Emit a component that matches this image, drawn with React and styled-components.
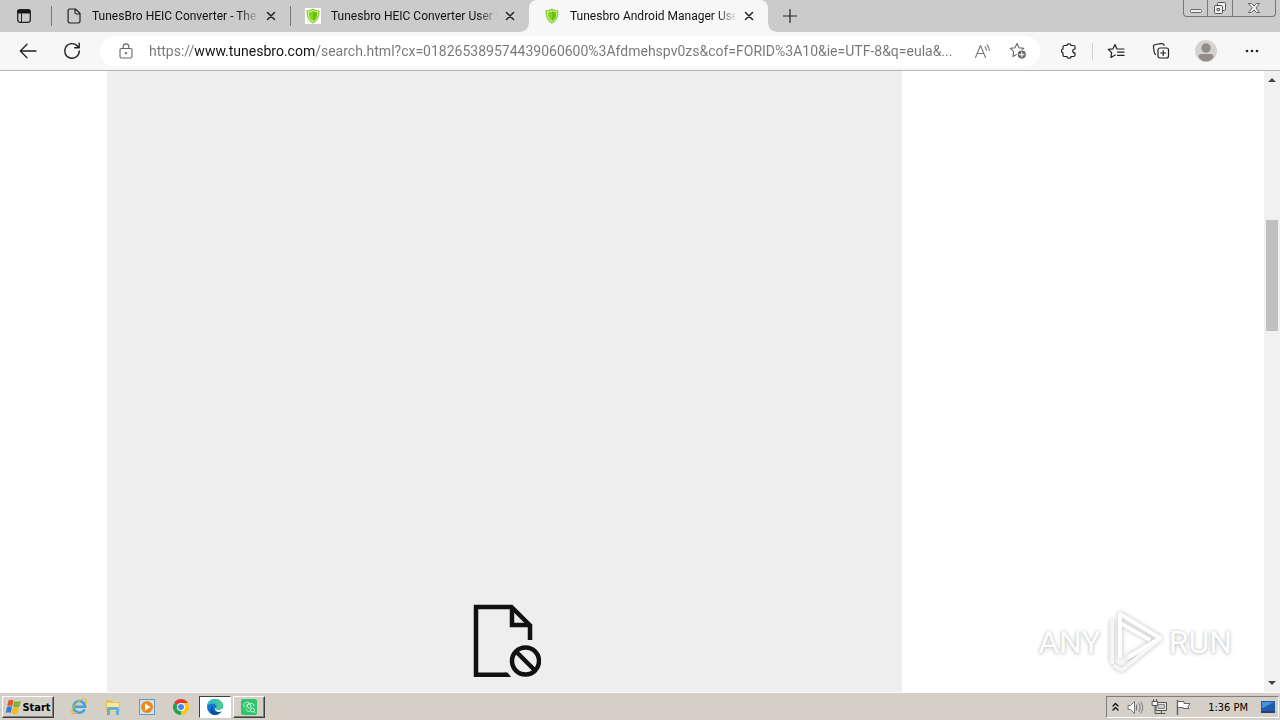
import React, { useState } from "react";
import styled, { createGlobalStyle, css } from "styled-components";

const GlobalStyle = createGlobalStyle`
  * { box-sizing: border-box; }
  body { margin: 0; background: #fff; }
  button, input { font: inherit; color: inherit; }
  svg { display: block; flex: none; }
`;

const Screen = styled.div`
  display: flex;
  flex-direction: column;
  height: 100vh;
  overflow: hidden;
  font-family: Roboto, "Noto Sans", sans-serif;
  font-size: 12px;
  color: #111;
`;

const PlainButton = styled.button`
  display: flex;
  align-items: center;
  justify-content: center;
  padding: 0;
  border: 0;
  background: none;
`;

/* ---------- tab strip ---------- */
const TabStrip = styled.header`
  display: flex;
  align-items: stretch;
  height: 32px;
  background: #cbcbcb;
`;

const TabActions = styled(PlainButton)`
  width: 51px;
  padding-right: 3px;
`;

const TabItem = styled.div`
  position: relative;
  display: flex;
  align-items: center;
  flex: 0 1 239px;
  min-width: 0;
  padding: 0 10px 0 15px;
  ${(p) =>
    p.$active
      ? css`
          background: #f7f7f7;
          border-radius: 8px 8px 0 0;
          &::before,
          &::after {
            content: "";
            position: absolute;
            bottom: 0;
            width: 8px;
            height: 8px;
          }
          &::before {
            right: 100%;
            background: radial-gradient(circle at 0 0, transparent 7px, #f7f7f7 8px);
          }
          &::after {
            left: 100%;
            background: radial-gradient(circle at 100% 0, transparent 7px, #f7f7f7 8px);
          }
        `
      : css`
          &::before {
            content: "";
            position: absolute;
            left: 0;
            top: 6px;
            width: 1px;
            height: 20px;
            background: #777;
          }
        `}
`;

const TabTitle = styled.a`
  flex: 1;
  min-width: 0;
  margin-left: 10px;
  overflow: hidden;
  white-space: nowrap;
  line-height: 20px;
  color: #111;
  text-decoration: none;
  mask-image: linear-gradient(90deg, #000 calc(100% - 20px), transparent);
`;

const TabClose = styled(PlainButton)`
  width: 18px;
  height: 18px;
  margin-left: 3px;
`;

const NewTab = styled(PlainButton)`
  width: 44px;
`;

const WindowControls = styled.div`
  display: flex;
  width: 93px;
  height: 17px;
  margin: 0 4px 0 auto;
  border: 1px solid #777;
  border-top: 0;
  border-radius: 0 0 4px 4px;
`;

const WindowButton = styled(PlainButton)`
  flex: ${(p) => p.$grow || 1};
  & + & {
    border-left: 1px solid #777;
  }
`;

/* ---------- toolbar ---------- */
const Toolbar = styled.nav`
  display: flex;
  align-items: center;
  height: 39px;
  padding-right: 5px;
  background: #f7f7f7;
  border-bottom: 1px solid #b5b5b5;
`;

const ToolButton = styled(PlainButton)`
  width: ${(p) => p.$width || 46}px;
  height: 30px;
`;

const BackButton = styled(ToolButton)`
  margin-left: 6px;
`;

const AddressBar = styled.form`
  display: flex;
  align-items: center;
  flex: 1;
  min-width: 0;
  height: 31px;
  margin: 0 6px;
  padding: 0 4px 0 18px;
  background: #fff;
  border-radius: 16px;
`;

/* The host part of the address is darker than the rest. */
const AddressInput = styled.input`
  flex: 1;
  min-width: 0;
  height: 24px;
  margin-left: 15px;
  padding: 0;
  border: 0;
  outline: 0;
  font-size: 14px;
  line-height: 24px;
  background: linear-gradient(90deg, #767676 45px, #111 45px, #111 166px, #767676 166px);
  background-clip: text;
  -webkit-background-clip: text;
  -webkit-text-fill-color: transparent;
`;

const ToolDivider = styled.span`
  width: 1px;
  height: 17px;
  background: #d0d0d0;
`;

/* ---------- page ---------- */
const Viewport = styled.main`
  display: flex;
  flex: 1;
  min-height: 0;
`;

const PageBody = styled.div`
  position: relative;
  flex: 1;
  padding-left: 107px;
  background: #fff;
`;

const BlockedFrame = styled.section`
  display: flex;
  align-items: flex-end;
  justify-content: center;
  max-width: 795px;
  height: 100%;
  padding-bottom: 14px;
  background: #eee;
`;

const Watermark = styled.div`
  position: absolute;
  right: 32px;
  bottom: 14px;
  display: flex;
  align-items: center;
  gap: 4px;
  font: 32px/72px Roboto, "Liberation Sans", sans-serif;
  color: #fdfdfd;
  text-shadow: 0 0 3px #bbb, 0 2px 4px #ddd;
  svg {
    filter: drop-shadow(0 0 2px #bbb);
  }
`;

const ScrollBar = styled.div`
  display: flex;
  flex-direction: column;
  width: 16px;
  padding: 0 2px;
  background: #f1f1f1;
`;

const ScrollArrow = styled(PlainButton)`
  height: 17px;
`;

const ScrollSpace = styled.span`
  flex: ${(p) => p.$share};
`;

const ScrollThumb = styled.span`
  flex: 111;
  background: #c1c1c1;
`;

/* ---------- taskbar ---------- */
const Taskbar = styled.footer`
  display: flex;
  align-items: center;
  height: 28px;
  padding: 1px 0 0 2px;
  background: #d4d0c8;
  border-top: 1px solid #fff;
  font-family: "DejaVu Sans Condensed", "DejaVu Sans", sans-serif;
  font-size: 11px;
`;

const raised = css`
  border: 1px solid;
  border-color: #fff #404040 #404040 #fff;
  box-shadow: inset -1px -1px 0 #808080;
`;

const StartButton = styled(PlainButton)`
  ${raised}
  width: 52px;
  height: 22px;
  margin-right: 8px;
  font-weight: bold;
  color: #000;
`;

const TaskButton = styled(PlainButton)`
  width: ${(p) => (p.$state ? 32 : 34)}px;
  height: 22px;
  ${(p) => p.$state === "open" && raised}
  ${(p) =>
    p.$state === "active" &&
    css`
      margin: 0 2px 0 1px;
      background: #fff;
      border: 1px solid;
      border-color: #404040 #fff #fff #404040;
    `}
`;

const Tray = styled.div`
  display: flex;
  align-items: center;
  gap: 7px;
  height: 22px;
  margin: 0 1px 0 auto;
  padding: 0 2px 0 4px;
  border: 1px solid;
  border-color: #808080 #fff #fff #808080;
`;

const Clock = styled.time`
  margin: 0 5px 0 9px;
  white-space: nowrap;
  color: #000;
`;

/* ---------- icons ---------- */
const Line = ({ w = 20, h = w, color = "#222", sw = 1, children }) => (
  <svg width={w} height={h} viewBox={`0 0 ${w} ${h}`} fill="none" stroke={color} strokeWidth={sw} strokeLinecap="round" strokeLinejoin="round" aria-hidden="true">
    {children}
  </svg>
);

const TabActionsIcon = () => (
  <Line w={16}>
    <rect x="1.7" y="1.7" width="12.6" height="12.6" rx="2.5" strokeWidth="1.3" />
    <path d="M2 2h12v3H2z" fill="#111" />
    <path d="M5.5 5v9" />
  </Line>
);

const FileIcon = () => (
  <Line w={16} sw={1.2}>
    <path d="M3.800 1h5.700l4.500 4.500v7.800c0 1-.7 1.700-1.700 1.700H3.800c-1 0-1.700-.7-1.700-1.700V2.700C2.100 1.700 2.800 1 3.800 1zM9 1.200v3.300c0 1 .5 1.500 1.500 1.500h3.200" />
  </Line>
);

const ShieldIcon = ({ backed }) => (
  <svg width="16" height="16" viewBox="0 0 16 16" aria-hidden="true">
    {backed && <path d="M0 0h16v16H0z" fill="#fff" />}
    <path d="M8 .5c2 1.300 4.200 1.700 6.500 1.800.2 6-1.200 10.700-6.500 13.400C2.700 13 1.300 8.300 1.500 2.300 3.800 2.200 6 1.800 8 .5z" fill="#91ca3b" />
    <path d="M8 2c1.600 1 3.300 1.400 5.200 1.500 0 5-1.100 8.500-5.200 10.700C3.900 12 2.800 8.500 2.800 3.500 4.700 3.400 6.400 3 8 2z" fill="#d7f2a2" />
    <path d="M8 3.200c1.300.8 2.700 1.100 4.200 1.200 0 4-1 6.800-4.200 8.600-3.200-1.800-4.200-4.600-4.200-8.600C5.300 4.300 6.700 4 8 3.200z" fill="#7fd420" />
    <path d="M8 3.200c1.300.8 2.700 1.100 4.200 1.200 0 4-1 6.800-4.200 8.600z" fill="#66c410" />
  </svg>
);

const CloseIcon = () => (
  <Line w={10} sw={1.5}>
    <path d="m1.500 1.500 7 7m0-7-7 7" />
  </Line>
);

const PlusIcon = () => (
  <Line w={14} sw={1.2}>
    <path d="M7 .5v13M.5 7h13" />
  </Line>
);

const BackIcon = () => (
  <Line w={18} sw={1.3}>
    <path d="M17 9H1.500M8 2.300 1.300 9 8 15.700" />
  </Line>
);

const ReloadIcon = () => (
  <Line w={18} sw={1.4}>
    <path d="M16.300 9a7.300 7.300 0 1 1-2.100-5.200L16 5.700M16.200 1.300v4.500h-4.500" />
  </Line>
);

const LockIcon = () => (
  <Line w={16} color="#666" sw={1.1}>
    <rect x="2" y="5.500" width="12" height="9.500" rx="1.500" />
    <path d="M5.200 5.500V3.700a2.800 2.800 0 0 1 5.600 0v1.800" />
    <circle cx="8" cy="10.200" r=".6" fill="#666" />
  </Line>
);

const ReadAloudIcon = () => (
  <Line w={18} color="#777" sw={1.1}>
    <path d="m2.500 15.500 5-12 5 12M4.200 11.500h6.600M12 5c1 1 1.400 2 1.400 3.300M14 3c1.500 1.500 2.300 3.300 2.300 5.500" />
  </Line>
);

const AddFavoriteIcon = () => (
  <Line w={18} color="#666" sw={1.1}>
    <path d="m8 1.500 2 4.300 4.700.6-3.400 3.300.8 4.700L8 12.200l-4.100 2.200.8-4.700-3.400-3.300L6 5.800z" />
    <circle cx="12.800" cy="12.600" r="4.600" fill="#666" stroke="#fff" />
    <path d="M12.800 10.400v4.400M10.600 12.600H15" stroke="#fff" />
  </Line>
);

const ExtensionsIcon = () => (
  <Line w={16} sw={1.2}>
    <path d="M3.500 2.500H6c0-2.200 4-2.200 4 0h2.500c.8 0 1.500.7 1.500 1.500v2c-3 .2-3 4 0 4.200V12c0 .8-.7 1.500-1.500 1.500H10c0 2.300-4 2.300-4 0H3.500C2.700 13.500 2 12.800 2 12V9.800C0 9.800 0 6 2 6V4c0-.8.7-1.500 1.500-1.500z" />
  </Line>
);

const FavoritesIcon = () => (
  <Line w={18} h={16} sw={1.2}>
    <path d="M10.600 6 9.800 5.800 8 1.500 6 5.800l-4.700.6 3.400 3.300-.8 4.700L8.200 12M11.500 6H17M10.500 9.200H17M10.500 12.400H17" />
  </Line>
);

const CollectionsIcon = () => (
  <Line w={18} sw={1.2}>
    <rect x="6" y="6" width="10.500" height="10" rx="2" />
    <path d="M11.200 8.500v5M8.700 11h5M3.500 12.500C2.300 11.800 2.300 10.500 2 9L1.500 5c-.2-1.200.5-2.200 1.800-2.500l6-.9c1.500-.2 2.400.3 2.900 1.700" />
  </Line>
);

const AvatarIcon = () => (
  <svg width="22" height="22" viewBox="0 0 22 22" aria-hidden="true">
    <circle cx="11" cy="11" r="11" fill="#d5d2d0" />
    <circle cx="11" cy="8" r="4.700" fill="#918c89" />
    <path d="M3.500 17c0-2 1-3 3-3h9c2 0 3 1 3 3-1.500 2.800-4.300 4.500-7.500 4.500S5 19.800 3.500 17z" fill="#918c89" />
  </svg>
);

const MoreIcon = () => (
  <svg width="16" height="4" fill="#222" aria-hidden="true">
    <circle cx="3" cy="2" r="1.300" />
    <circle cx="8" cy="2" r="1.300" />
    <circle cx="13" cy="2" r="1.300" />
  </svg>
);

const MinimizeIcon = () => (
  <Line w={14} color="#666">
    <rect x="1.500" y="8.500" width="11" height="3" rx="1" fill="#eee" />
  </Line>
);

const RestoreIcon = () => (
  <Line w={14} color="#555">
    <rect x="4.500" y="1.500" width="8" height="8" rx="1" fill="#eee" />
    <rect x="1.500" y="4.500" width="8" height="8" rx="1" fill="#eee" />
    <rect x="4.500" y="7.500" width="2" height="2" />
  </Line>
);

const WindowCloseIcon = () => (
  <Line w={14} color="#666">
    <path d="M1.500 2.500h3L7 5l2.500-2.500h3L9 7l3.500 4.500h-3L7 9l-2.500 2.500h-3L5 7z" fill="#eee" />
  </Line>
);

const BlockedIcon = () => (
  <svg width="72" height="74" viewBox="0 0 72 74" fill="none" stroke="#111" strokeWidth="4.500" aria-hidden="true">
    <path d="M37 70.700H7V3h35.500L61 21.500V36" />
    <path d="M43 3v18h18" />
    <circle cx="56.500" cy="57" r="13.500" />
    <path d="m47 47.500 19 19" />
    <path d="M36 68.450h2.500l3.500 4.500h-6z" fill="#111" stroke="none" />
  </svg>
);

const PlayLogo = () => (
  <svg width="60" height="64" viewBox="0 0 60 64" fill="none" stroke="#fdfdfd" strokeWidth="4" strokeLinejoin="round" aria-hidden="true">
    <path d="M7 54V10M15 49V4l40 24M21 49l34-20-38 31-9-5" stroke="#f6f6f6" />
    <path d="M15 48V4l40 24-32 19M15 13l30 17" />
  </svg>
);

const Triangle = ({ down }) => (
  <svg width="8" height="5" aria-hidden="true">
    <path d={down ? "M0 0h8L4 4z" : "M0 5h8L4 1z"} fill="#444" />
  </svg>
);

const WindowsIcon = () => (
  <svg width="17" height="16" viewBox="0 0 17 16" aria-hidden="true">
    <path d="M3.500 1.500c2-1.300 3.500-1 5 0L7.200 7.300c-1.500-1-3-1-5 0z" fill="#e6562b" />
    <path d="M9.300 2c2 1 4 1 6.700-.2l-1.600 5.800c-2.200 1.200-4.500 1-6.300.1z" fill="#78b72f" />
    <path d="M2 8.200c2-1.200 3.500-1 5 0l-1.300 5.700c-1.600-1-3-1-5 .1z" fill="#367bd0" />
    <path d="M7.900 8.600c1.800 1 4 1 6.300 0l-1.600 5.700c-2.200 1.200-4.200 1-6 0z" fill="#f6bd20" />
  </svg>
);

const IeIcon = () => (
  <svg width="18" height="18" viewBox="0 0 18 18" fill="none" aria-hidden="true">
    <path d="M14.500 11.500a5.800 5.800 0 1 1 .6-2.700H4.500" stroke="#3da4df" strokeWidth="2.500" />
    <path d="M2.500 15.500C-.5 13 9-.5 15.500 1.500c1.700.8 1 2.800.3 4M2.500 15.500c1 .8 3 .2 4.500-.8" stroke="#e8b92e" strokeWidth="1.200" />
  </svg>
);

const ExplorerIcon = () => (
  <svg width="18" height="18" viewBox="0 0 18 18" aria-hidden="true">
    <path d="M2 2h6l1 2h7v10H2z" fill="#e6c45d" />
    <path d="M3 5h12v8H3z" fill="#fae996" />
    <path d="M3 11c0-1.500.8-2 2-2h8c1.200 0 2 .5 2 2v6h-3v-5H6v5H3z" fill="#5fb0dc" />
  </svg>
);

const MediaIcon = () => (
  <svg width="18" height="18" viewBox="0 0 18 18" aria-hidden="true">
    <rect x="1.500" y="1.500" width="15" height="15" fill="#cce4f5" stroke="#629bc5" />
    <circle cx="9" cy="9" r="6" fill="#f18a1a" />
    <path d="m7 5.500 5.500 3.500L7 12.500z" fill="#fff" />
  </svg>
);

const ChromeIcon = () => (
  <svg width="18" height="18" viewBox="0 0 18 18" aria-hidden="true">
    <path d="M9 9 2.070 5A8 8 0 0 1 15.930 5z" fill="#e33b2e" />
    <path d="M9 9V17A8 8 0 0 1 2.070 5z" fill="#2da04b" />
    <path d="M9 9l6.930-4A8 8 0 0 1 9 17z" fill="#fbc817" />
    <path d="M9 5h6.900L12.500 11z" fill="#fbc817" />
    <circle cx="9" cy="9" r="4" fill="#fff" />
    <circle cx="9" cy="9" r="3" fill="#4285f4" />
  </svg>
);

const EdgeIcon = () => (
  <svg width="18" height="18" viewBox="0 0 18 18" aria-hidden="true">
    <circle cx="9" cy="9" r="8" fill="#1478ce" />
    <path d="M1 8C1.500 3.500 5 1 9 1c4.800 0 8 3 8 6.500 0 3-2.200 4.500-5 4.500-2 0-2.700-.8-1.700-2C11.500 7.500 9 5.500 6.500 5.700 3.500 5.800 1.500 7 1 8z" fill="#32bfc4" />
    <path d="M9 1c4.800 0 8 3 8 6.500 0 3-2.200 4.500-5 4.500-2 0-2.700-.8-1.700-2 1.500-2.500.7-6-1.300-9z" fill="#59cf7c" opacity=".7" />
    <path d="M7 8c-1.500 4 2 7.500 8 5.500-2 3-5.500 4-8.500 3C3.500 15 3.500 9.500 7 8z" fill="#0c4e9c" />
    <path d="M10.300 10c-1 1.200-.3 2 1.700 2 2 0 3.600-.6 4.500-2l1 3-2.500.5c-3 1.200-6-.5-6-3z" fill="#fff" />
  </svg>
);

const GreenAppIcon = () => (
  <svg width="18" height="18" viewBox="0 0 18 18" fill="none" stroke="#c9f7d8" aria-hidden="true">
    <rect x="1" y="1" width="16" height="16" rx="2" fill="#2fc56c" stroke="none" />
    <path d="M9 4.500C5 3 2 7 5 9.500M6 8c3-4 8-3 8 0M6 11c1 3 4 3 5 1" />
    <circle cx="9" cy="8" r="2" />
    <circle cx="12.500" cy="12" r="2" />
    <path d="m14 13.500 1.500 1.500" />
  </svg>
);

const ChevronsIcon = () => (
  <Line w={9} h={10} color="#111" sw={1.4}>
    <path d="m2 4 2.500-2.500L7 4M2 8l2.500-2.500L7 8" />
  </Line>
);

const SpeakerIcon = () => (
  <Line w={17} color="#777">
    <path d="M1.500 6.500h2l4-4v12l-4-4h-2z" fill="#fff" />
    <path d="M9.500 6v5M12 4.500c1.500 2.500 1.500 5.500 0 8M14 3c2.200 3.500 2.200 7.500 0 11" />
  </Line>
);

const NetworkIcon = () => (
  <Line w={17} color="#555">
    <rect x="5.500" y="3.500" width="10" height="8" fill="#e8e8e8" />
    <rect x="7.500" y="5.500" width="6" height="4" fill="#ccc" stroke="#888" />
    <path d="M2.500 .5v2M5.500 .5v2M4 6.500v8h3M10.500 12v2M7 14.500h7" />
    <path d="M1.500 2.500h5v4h-5z" fill="#fff" />
  </Line>
);

const FlagIcon = () => (
  <Line w={17} color="#666">
    <path d="M2.500 1.500v14" strokeWidth="1.500" />
    <path d="M3 2.500h6v2h6l-2 3 1 2H8v-1H3z" fill="#fff" />
  </Line>
);

const DesktopIcon = () => (
  <svg width="16" height="16" aria-hidden="true">
    <path d="M1 2h14v10H1z" fill="#1f5cae" />
    <path d="M2 3h12L3 9H2z" fill="#4b91d6" />
    <path d="M1 12h14v2H1z" fill="#244171" />
  </svg>
);

/* ---------- data ---------- */
const tabs = [
  { title: "TunesBro HEIC Converter - The", icon: <FileIcon /> },
  { title: "Tunesbro HEIC Converter User G", icon: <ShieldIcon backed /> },
  { title: "Tunesbro Android Manager Use", icon: <ShieldIcon />, active: true },
];

const tasks = [
  { label: "Internet Explorer", icon: <IeIcon /> },
  { label: "Windows Explorer", icon: <ExplorerIcon /> },
  { label: "Media Player", icon: <MediaIcon /> },
  { label: "Chrome", icon: <ChromeIcon /> },
  { label: "Edge", icon: <EdgeIcon />, state: "active" },
  { label: "TunesBro", icon: <GreenAppIcon />, state: "open" },
];

export default function App() {
  const [url, setUrl] = useState(
    "https://www.tunesbro.com/search.html?cx=018265389574439060600%3Afdmehspv0zs&cof=FORID%3A10&ie=UTF-8&q=eula&..."
  );
  return (
    <Screen>
      <GlobalStyle />
      <TabStrip>
        <TabActions aria-label="Tab actions"><TabActionsIcon /></TabActions>
        {tabs.map((tab) => (
          <TabItem key={tab.title} $active={tab.active}>
            {tab.icon}
            <TabTitle href="#">{tab.title}</TabTitle>
            <TabClose aria-label="Close tab"><CloseIcon /></TabClose>
          </TabItem>
        ))}
        <NewTab aria-label="New tab"><PlusIcon /></NewTab>
        <WindowControls>
          <WindowButton $grow={5} aria-label="Minimize"><MinimizeIcon /></WindowButton>
          <WindowButton $grow={5} aria-label="Restore"><RestoreIcon /></WindowButton>
          <WindowButton $grow={9} aria-label="Close"><WindowCloseIcon /></WindowButton>
        </WindowControls>
      </TabStrip>
      <Toolbar>
        <BackButton $width={44} aria-label="Back"><BackIcon /></BackButton>
        <ToolButton $width={44} aria-label="Reload"><ReloadIcon /></ToolButton>
        <AddressBar onSubmit={(e) => e.preventDefault()}>
          <LockIcon />
          <AddressInput aria-label="Address" value={url} onChange={(e) => setUrl(e.target.value)} />
          <ToolButton $width={36} type="button" aria-label="Read aloud"><ReadAloudIcon /></ToolButton>
          <ToolButton $width={36} type="button" aria-label="Add to favorites"><AddFavoriteIcon /></ToolButton>
        </AddressBar>
        <ToolButton aria-label="Extensions"><ExtensionsIcon /></ToolButton>
        <ToolDivider />
        <ToolButton aria-label="Favorites"><FavoritesIcon /></ToolButton>
        <ToolButton $width={44} aria-label="Collections"><CollectionsIcon /></ToolButton>
        <ToolButton aria-label="Profile"><AvatarIcon /></ToolButton>
        <ToolButton aria-label="More"><MoreIcon /></ToolButton>
      </Toolbar>
      <Viewport>
        <PageBody>
          <BlockedFrame aria-label="Blocked content"><BlockedIcon /></BlockedFrame>
          <Watermark>
            <span>ANY</span>
            <PlayLogo />
            <span>RUN</span>
          </Watermark>
        </PageBody>
        <ScrollBar>
          <ScrollArrow aria-label="Scroll up"><Triangle /></ScrollArrow>
          <ScrollSpace $share={132} />
          <ScrollThumb />
          <ScrollSpace $share={344} />
          <ScrollArrow aria-label="Scroll down"><Triangle down /></ScrollArrow>
        </ScrollBar>
      </Viewport>
      <Taskbar>
        <StartButton><WindowsIcon />Start</StartButton>
        {tasks.map((task) => (
          <TaskButton key={task.label} $state={task.state} aria-label={task.label}>{task.icon}</TaskButton>
        ))}
        <Tray>
          <ChevronsIcon />
          <SpeakerIcon />
          <NetworkIcon />
          <FlagIcon />
          <Clock>1:36 PM</Clock>
          <DesktopIcon />
        </Tray>
      </Taskbar>
    </Screen>
  );
}
